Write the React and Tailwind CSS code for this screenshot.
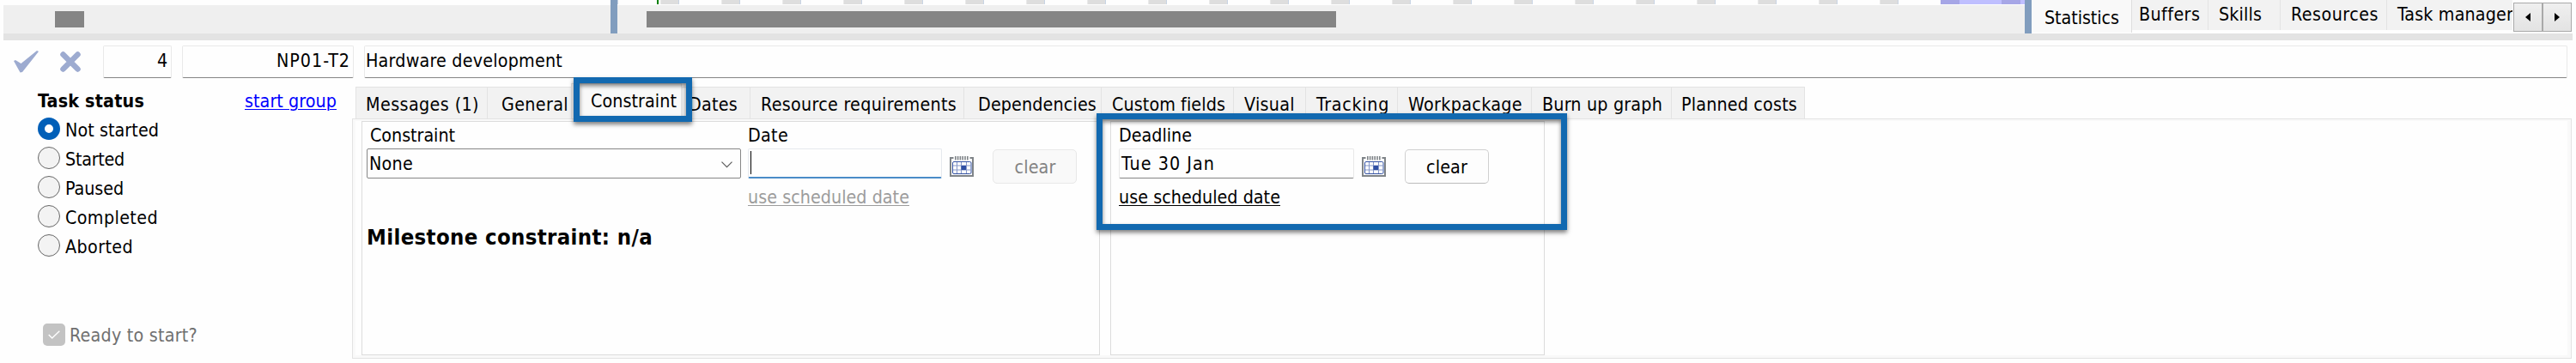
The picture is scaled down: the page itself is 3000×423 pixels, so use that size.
import React, { useLayoutEffect, useRef, useState } from "react";

// Spreads the letters so a label takes exactly the width it is given
const FitText = ({ children, width, className = "" }) => {
  const ref = useRef(null);
  const [spacing, setSpacing] = useState(0);

  useLayoutEffect(() => {
    const natural = ref.current.getBoundingClientRect().width;
    setSpacing((width - natural) / children.length);
  }, [children, width]);

  return (
    <span
      ref={ref}
      className={`inline-block align-top whitespace-pre ${className}`}
      style={{ letterSpacing: `${spacing}px` }}
    >
      {children}
    </span>
  );
};

const CalendarIcon = () => (
  <svg width="28" height="26" viewBox="0 0 28 26" fill="none">
    <path d="M4.500 3H1v21h26V3h-3.500" stroke="#7f8488" strokeWidth="2" />
    <path
      d="M6.800 1v4.500M9.600 1v4.500M12.400 1v4.500M15.200 1v4.500M18 1v4.500M20.800 1v4.500"
      stroke="#7f8488"
      strokeWidth="1.600"
    />
    <rect x="3.500" y="7.500" width="21.500" height="14" rx="1.500" fill="#fff" stroke="#3352a3" />
    <path
      d="M8.500 8v13M13.500 8v13M19.500 8v13M4 12H24.500M4 17H24.500"
      stroke="#8597c8"
      strokeWidth="1"
    />
    <path d="M13.500 12H19V17h-5.500z" fill="#2f4fa3" />
  </svg>
);

const tasks = [
  { label: "Not started", width: 109 },
  { label: "Started", width: 69 },
  { label: "Paused", width: 68 },
  { label: "Completed", width: 108 },
  { label: "Aborted", width: 79 },
];

const topTabs = [
  { label: "Buffers", width: 71, box: "w-[89px] pl-[8px]" },
  { label: "Skills", width: 50, box: "w-[84px] pl-[12px]" },
  { label: "Resources", width: 102, box: "w-[124px] pl-[12px]" },
  { label: "Task manager", width: 135, box: "w-[147px] pl-[12px]" },
];

const tabs = [
  { label: "Messages (1)", width: 132, box: "w-[153px] pl-[11px]" },
  { label: "General", width: 78, box: "w-[98px] pl-[16px]" },
  { label: "Constraint", width: 100, box: "w-[129px] pl-[22px]", active: true },
  { label: "Dates", width: 57, box: "w-[79px] pl-[7px]" },
  { label: "Resource requirements", width: 228, box: "w-[249px] pl-[12px]" },
  { label: "Dependencies", width: 138, box: "w-[160px] pl-[16px]" },
  { label: "Custom fields", width: 132, box: "w-[154px] pl-[12px]" },
  { label: "Visual", width: 59, box: "w-[84px] pl-[12px]" },
  { label: "Tracking", width: 85, box: "w-[107px] pl-[12px]" },
  { label: "Workpackage", width: 133, box: "w-[156px] pl-[12px]" },
  { label: "Burn up graph", width: 140, box: "w-[163px] pl-[12px]" },
  { label: "Planned costs", width: 135, box: "w-[156px] pl-[11px]" },
];

const TopBar = () => (
  <div className="ml-1 w-[2992px] h-[47px] border-b-8 border-[#e3e3e3] flex">
    <div className="w-[707px] pt-[6px]">
      <div className="h-[33px] bg-[#efefef] pl-[60px] pt-[7px]">
        <div className="w-[34px] h-[19px] bg-[#858585]" />
      </div>
    </div>
    <div className="w-2 bg-[#819dbe]" />
    <div className="w-[1639px]">
      {/* Day columns of the gantt chart */}
      <div className="h-[5px] flex">
        <div className="w-px mr-[45px] bg-[#c8d4e4]" />
        <div className="w-[2px] mr-[2px] bg-[#008000]" />
        {Array.from({ length: 21 }, (_, i) => (
          <div
            key={i}
            className="w-[22px] mr-[49px] bg-[#dedede] border-l border-r border-l-[#eaeaea] border-r-[#c8d4e4]"
          />
        ))}
        <div className="w-[98px] bg-[#bfbfff] flex">
          <div className="w-[22px] mr-[49px] bg-[#a6a6e6]" />
          <div className="w-[22px] bg-[#a6a6e6]" />
        </div>
      </div>
      <div className="mt-px h-[33px] bg-[#efefef] pl-[34px] pt-[7px]">
        <div className="w-[803px] h-[19px] bg-[#858585]" />
      </div>
    </div>
    <div className="w-2 bg-[#819dbe]" />
    <div className="w-[117px] h-[38px] pl-[15px] pt-[6px] bg-[#f9f9f9] border-r border-[#dedede]">
      <FitText width={87}>Statistics</FitText>
    </div>
    <div className="w-[443px] h-[35px] flex overflow-hidden">
      {topTabs.map((tab) => (
        <div
          key={tab.label}
          className={`shrink-0 h-full pt-[2px] bg-[#f2f2f2] border-r border-[#e3e3e3] ${tab.box}`}
        >
          <FitText width={tab.width}>{tab.label}</FitText>
        </div>
      ))}
    </div>
    <div className="mt-[3px] ml-px h-[34px] flex">
      <div className="w-[34px] border border-[#a9a9a9] bg-gradient-to-b from-[#efefef] to-[#e3e3e3] flex items-center justify-center">
        <svg width="6" height="10" viewBox="0 0 6 10">
          <path d="M6 0v10L0 5z" fill="#000" />
        </svg>
      </div>
      <div className="w-[34px] border border-[#a9a9a9] bg-gradient-to-b from-[#efefef] to-[#e3e3e3] flex items-center justify-center">
        <svg width="6" height="10" viewBox="0 0 6 10">
          <path d="M0 0v10l6-5z" fill="#000" />
        </svg>
      </div>
    </div>
  </div>
);

const Header = () => (
  <div className="h-[44px] mt-[6px] flex items-start">
    <svg className="ml-4 mt-[6px]" width="29" height="26" viewBox="0 0 29 26">
      <path d="M0 12l2-1 6.500 4L27 0l2 1L10 25 7.500 25.500z" fill="#9dabd0" />
    </svg>
    <svg className="ml-[25px] mt-[7px]" width="24" height="24" viewBox="0 0 24 24">
      <path d="M3.500 3.500l17 17M20.500 3.500l-17 17" stroke="#9dabd0" strokeWidth="6.500" strokeLinecap="round" />
    </svg>
    <div className="ml-[26px] w-[80px] h-[38px] pr-[3px] pt-[2px] text-right rounded-xs border border-[#e9e9e9] border-b-[#858585]">
      <FitText width={13}>4</FitText>
    </div>
    <div className="ml-3 w-[200px] h-[38px] pr-[3px] pt-[2px] text-right rounded-xs border border-[#e9e9e9] border-b-[#858585]">
      <FitText width={86}>NP01-T2</FitText>
    </div>
    <div className="ml-3 w-[2566px] h-[38px] pl-px pt-[2px] rounded-xs border border-[#e9e9e9] border-b-[#858585]">
      <FitText width={229}>Hardware development</FitText>
    </div>
  </div>
);

const Sidebar = () => (
  <div className="w-[410px] h-full pl-[44px] pt-[6px]">
    <div className="flex h-[34px]">
      <div className="w-[241px]">
        <FitText width={124} className="font-bold">
          Task status
        </FitText>
      </div>
      <div>
        <FitText
          width={107}
          className="text-[#0000ff] underline decoration-1 underline-offset-[2px]"
        >
          start group
        </FitText>
      </div>
    </div>
    {tasks.map((task, i) => (
      <div key={task.label} className="h-[34px] flex">
        {i === 0 ? (
          <div className="w-[26px] h-[26px] rounded-full border-8 border-[#005fb8] bg-white" />
        ) : (
          <div className="w-[26px] h-[26px] rounded-full border border-[#666] bg-[#f3f3f3]" />
        )}
        <div className="pl-[6px]">
          <FitText width={task.width}>{task.label}</FitText>
        </div>
      </div>
    ))}
    <div className="mt-[70px] ml-[6px] flex">
      <div className="w-[26px] h-[26px] rounded-[5px] bg-[#c3c3c3] flex items-center justify-center">
        <svg width="14" height="10" viewBox="0 0 14 10" fill="none">
          <path d="M0.700 5l4 4L13.300 0.700" stroke="#fff" strokeWidth="1.400" />
        </svg>
      </div>
      <div className="pl-[5px] -mt-px text-[#707070]">
        <FitText width={149}>Ready to start?</FitText>
      </div>
    </div>
  </div>
);

const ConstraintGroup = () => (
  <div className="w-[860px] h-[273px] pl-[5px] border border-[#dcdcdc]">
    <div className="flex">
      <div className="w-[444px]">
        <div className="h-[31px] pl-[4px] pt-px">
          <FitText width={99}>Constraint</FitText>
        </div>
        <div className="w-[436px] h-[35px] pl-[2px] pr-[9px] pt-[2px] flex justify-between border border-[#868686] rounded-xs">
          <FitText width={51}>None</FitText>
          <svg className="mt-[12px]" width="13" height="8" viewBox="0 0 13 8" fill="none">
            <path d="M0.500 0.700l6 6 6-6" stroke="#5c5c5c" strokeWidth="1.200" />
          </svg>
        </div>
      </div>
      <div>
        <div className="h-[31px] pt-px">
          <FitText width={47}>Date</FitText>
        </div>
        <div className="flex">
          <div className="w-[226px] h-[35px] pl-[2px] pt-[2px] border border-[#e6e9ee] border-b-2 border-b-[#4a8cc8] rounded-xs">
            <div className="w-px h-[27px] bg-black" />
          </div>
          <div className="ml-[9px] mt-[8px]">
            <CalendarIcon />
          </div>
          <div className="ml-[22px] mt-px w-[98px] h-[40px] pt-[5px] pl-px text-center rounded-[5px] border border-[#e8e8e8] bg-[#f9f9f9] text-[#838383]">
            <FitText width={48}>clear</FitText>
          </div>
        </div>
        <FitText
          width={188}
          className="mt-px text-[#9c9c9c] underline decoration-1 underline-offset-[2px]"
        >
          use scheduled date
        </FitText>
      </div>
    </div>
    <div className="mt-[13px] text-[25.5px] leading-[36px] font-bold">
      <FitText width={333}>Milestone constraint: n/a</FitText>
    </div>
  </div>
);

const DeadlineGroup = () => (
  <div className="ml-3 w-[506px] h-[273px] pl-[9px] border border-[#dcdcdc]">
    <div className="h-[31px] pt-px">
      <FitText width={85}>Deadline</FitText>
    </div>
    <div className="flex">
      <div className="w-[274px] h-[35px] pl-[2px] pt-[2px] border border-[#e9e9e9] border-b-[#858585] rounded-xs">
        <FitText width={109}>Tue 30 Jan</FitText>
      </div>
      <div className="ml-[9px] mt-[8px]">
        <CalendarIcon />
      </div>
      <div className="ml-[22px] mt-px w-[98px] h-[40px] pt-[5px] text-center rounded-[5px] border border-[#d0d0d0] border-b-[#bcbcbc] bg-[#fdfdfd]">
        <FitText width={48}>clear</FitText>
      </div>
    </div>
    <FitText width={188} className="mt-px underline decoration-1 underline-offset-[2px]">
      use scheduled date
    </FitText>
  </div>
);

const Details = () => (
  <div className="w-[2585px]">
    <div className="ml-1 h-[41px] flex items-end">
      {tabs.map((tab) =>
        tab.active ? (
          <div
            key={tab.label}
            className={`h-[41px] pt-[5px] bg-[#f9f9f9] border border-b-0 border-[#e3e3e3] ${tab.box}`}
          >
            <FitText width={tab.width}>{tab.label}</FitText>
          </div>
        ) : (
          <div
            key={tab.label}
            className={`h-[37px] pt-[5px] bg-[#f2f2f2] border-t border-l last:border-r border-[#e3e3e3] ${tab.box}`}
          >
            <FitText width={tab.width}>{tab.label}</FitText>
          </div>
        )
      )}
    </div>
    <div className="h-[280px] border border-[#e3e3e3] bg-[#f9f9f9] pl-[3px] pr-1 pt-[2px] pb-[3px]">
      <div className="h-full bg-[#fefefe] pl-[7px] flex">
        <ConstraintGroup />
        <DeadlineGroup />
      </div>
    </div>
  </div>
);

const App = () => {
  return (
    <div className="relative w-[3000px] h-[423px] overflow-hidden bg-[#fefefe] text-black text-[21.3px] leading-[30px] font-['DejaVu_Sans_Condensed','DejaVu_Sans',sans-serif]">
      <TopBar />
      <Header />
      <div className="flex">
        <Sidebar />
        <Details />
      </div>

      {/* Highlight frames */}
      <div className="absolute left-[668px] top-[90px] w-[138px] h-[52px] border-[7px] border-[#1269b0] shadow-[0_3px_5px_rgba(0,0,0,0.5),inset_0_3px_5px_rgba(0,0,0,0.5)]" />
      <div className="absolute left-[1277px] top-[132px] w-[548px] h-[136px] border-[7px] border-[#1269b0] shadow-[0_3px_5px_rgba(0,0,0,0.5),inset_0_3px_5px_rgba(0,0,0,0.5)]" />
    </div>
  );
};

export default App;
